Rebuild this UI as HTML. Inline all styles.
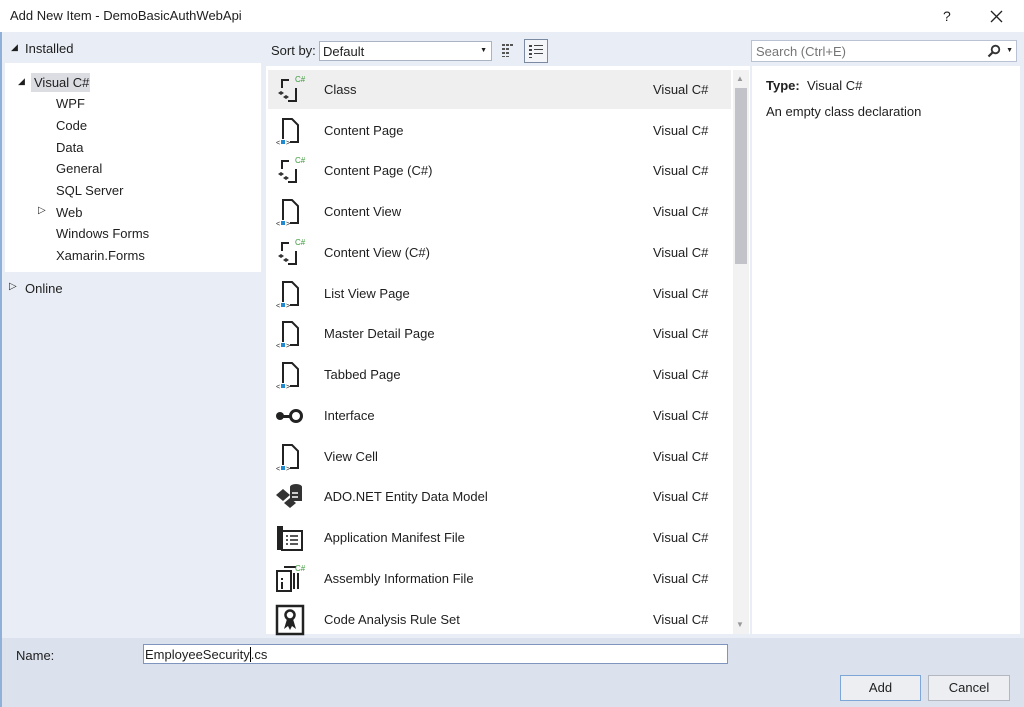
<!DOCTYPE html>
<html><head><meta charset="utf-8"><style>
*{box-sizing:border-box;margin:0;padding:0}
body{width:1024px;height:707px;overflow:hidden;background:#e9eef6;font-family:"Liberation Sans",sans-serif;font-size:13px;color:#1e1e1e;position:relative}
.a{position:absolute}
.title{left:0;top:0;width:1024px;height:32px;background:#fff}
.row{position:absolute;left:268px;width:463px;height:40px}
.row .n{position:absolute;left:56px;top:12px}
.row .t{position:absolute;left:385px;top:12px}
.row svg{position:absolute;left:6px;top:4px}
.tree div{position:absolute;font-size:13px}
</style></head><body>
<div class="a title"></div>
<div class="a" style="left:0;top:32px;width:2px;height:675px;background:#8fb0d8"></div>
<div class="a" style="left:10px;top:8px;font-size:13px">Add New Item - DemoBasicAuthWebApi</div>
<div class="a" style="left:943px;top:8px;font-size:14px">?</div>
<svg class="a" style="left:990px;top:10px" width="13" height="13"><path d="M1 1L12 12M12 1L1 12" stroke="#222" stroke-width="1.3"/></svg>

<div class="a" style="left:11px;top:42px;font-size:9px">◢</div>
<div class="a" style="left:25px;top:41px">Installed</div>
<div class="a" style="left:5px;top:63px;width:256px;height:209px;background:#fff"></div>
<div class="tree">
<div style="left:18px;top:76px;font-size:9px">◢</div>
<div style="left:31px;top:73px;width:59px;height:19px;background:#dcdde3"></div>
<div style="left:34px;top:75px">Visual C#</div>
<div style="left:56px;top:96px">WPF</div>
<div style="left:56px;top:118px">Code</div>
<div style="left:56px;top:140px">Data</div>
<div style="left:56px;top:161px">General</div>
<div style="left:56px;top:183px">SQL Server</div>
<div style="left:38px;top:205px;font-size:10px">▷</div>
<div style="left:56px;top:205px">Web</div>
<div style="left:56px;top:226px">Windows Forms</div>
<div style="left:56px;top:248px">Xamarin.Forms</div>
<div style="left:9px;top:281px;font-size:10px">▷</div>
<div style="left:25px;top:281px">Online</div>
</div>

<div class="a" style="left:271px;top:43px">Sort by:</div>
<div class="a" style="left:319px;top:41px;width:173px;height:20px;background:#fff;border:1px solid #a9b3c4"><span style="position:absolute;left:3px;top:2px">Default</span><span style="position:absolute;right:4px;top:5px;font-size:7px">▼</span></div>
<svg class="a" style="left:500px;top:42px" width="16" height="16"><g fill="#555"><rect x="2" y="2" width="3" height="2"/><rect x="6" y="2" width="3" height="2"/><rect x="10" y="2" width="3" height="2"/><rect x="2" y="6" width="3" height="2"/><rect x="6" y="6" width="3" height="2"/><rect x="2" y="10" width="3" height="2"/><rect x="6" y="10" width="3" height="2"/><rect x="2" y="14" width="3" height="1"/><rect x="6" y="14" width="3" height="1"/></g></svg>
<div class="a" style="left:524px;top:39px;width:24px;height:24px;border:1px solid #7a8aa0;background:#f3f5f9"></div>
<svg class="a" style="left:528px;top:43px" width="16" height="16"><g fill="#444"><rect x="1" y="2" width="3" height="2"/><rect x="6" y="2" width="9" height="1"/><rect x="1" y="6" width="3" height="2"/><rect x="6" y="6" width="9" height="1"/><rect x="1" y="10" width="3" height="2"/><rect x="6" y="10" width="9" height="1"/><rect x="1" y="14" width="3" height="1"/></g></svg>

<div class="a" style="left:751px;top:40px;width:266px;height:22px;background:#fff;border:1px solid #b8c2d2"><span style="position:absolute;left:4px;top:3px;color:#757575">Search (Ctrl+E)</span>
<svg style="position:absolute;right:15px;top:3px" width="14" height="14"><circle cx="8.5" cy="5.5" r="3.8" stroke="#333" stroke-width="1.8" fill="none"/><path d="M6 8L1.5 12.5" stroke="#333" stroke-width="2.2"/></svg>
<span style="position:absolute;right:3px;top:6px;font-size:7px">▼</span></div>

<div class="a" style="left:266px;top:66px;width:484px;height:568px;background:#fff"></div>
<div class="a" style="left:733px;top:70px;width:16px;height:564px;background:#f2f2f2"></div>
<div class="a" style="left:735px;top:88px;width:12px;height:176px;background:#c2c3c9"></div>
<div class="a" style="left:736px;top:74px;font-size:8px;color:#999">▲</div>
<div class="a" style="left:736px;top:620px;font-size:8px;color:#999">▼</div>
<div class="a" style="left:268px;top:70px;width:463px;height:39px;background:#efefef"></div>

<div class="a" style="left:752px;top:66px;width:268px;height:568px;background:#fff"></div>
<div class="a" style="left:766px;top:78px"><b>Type:</b>&nbsp; Visual C#</div>
<div class="a" style="left:766px;top:104px">An empty class declaration</div>

<!-- rows -->
<div class="row" style="top:70px"><svg width="32" height="32"><path d="M8 14V6h7M22 14v13h-8" stroke="#222" stroke-width="2" fill="none"/><text x="21" y="8" font-size="8" fill="#3a9a3a" font-family="Liberation Sans">C#</text><path d="M4 19l3-2 3 2-3 2zM9 23l3-2 3 2-3 2z" fill="#333"/></svg><span class="n">Class</span><span class="t">Visual C#</span></div>
<div class="row" style="top:111px"><svg width="32" height="32"><path d="M9 24V4h9l6 6v17h-8" stroke="#222" stroke-width="2" fill="none"/><text x="2" y="30" font-size="7" fill="#222">&lt;</text><rect x="7" y="25" width="4" height="4" fill="#1f8ad0"/><text x="12" y="30" font-size="7" fill="#222">&gt;</text></svg><span class="n">Content Page</span><span class="t">Visual C#</span></div>
<div class="row" style="top:151px"><svg width="32" height="32"><path d="M8 14V6h7M22 14v13h-8" stroke="#222" stroke-width="2" fill="none"/><text x="21" y="8" font-size="8" fill="#3a9a3a">C#</text><path d="M4 19l3-2 3 2-3 2zM9 23l3-2 3 2-3 2z" fill="#333"/></svg><span class="n">Content Page (C#)</span><span class="t">Visual C#</span></div>
<div class="row" style="top:192px"><svg width="32" height="32"><path d="M9 24V4h9l6 6v17h-8" stroke="#222" stroke-width="2" fill="none"/><text x="2" y="30" font-size="7" fill="#222">&lt;</text><rect x="7" y="25" width="4" height="4" fill="#1f8ad0"/><text x="12" y="30" font-size="7" fill="#222">&gt;</text></svg><span class="n">Content View</span><span class="t">Visual C#</span></div>
<div class="row" style="top:233px"><svg width="32" height="32"><path d="M8 14V6h7M22 14v13h-8" stroke="#222" stroke-width="2" fill="none"/><text x="21" y="8" font-size="8" fill="#3a9a3a">C#</text><path d="M4 19l3-2 3 2-3 2zM9 23l3-2 3 2-3 2z" fill="#333"/></svg><span class="n">Content View (C#)</span><span class="t">Visual C#</span></div>
<div class="row" style="top:274px"><svg width="32" height="32"><path d="M9 24V4h9l6 6v17h-8" stroke="#222" stroke-width="2" fill="none"/><text x="2" y="30" font-size="7" fill="#222">&lt;</text><rect x="7" y="25" width="4" height="4" fill="#1f8ad0"/><text x="12" y="30" font-size="7" fill="#222">&gt;</text></svg><span class="n">List View Page</span><span class="t">Visual C#</span></div>
<div class="row" style="top:314px"><svg width="32" height="32"><path d="M9 24V4h9l6 6v17h-8" stroke="#222" stroke-width="2" fill="none"/><text x="2" y="30" font-size="7" fill="#222">&lt;</text><rect x="7" y="25" width="4" height="4" fill="#1f8ad0"/><text x="12" y="30" font-size="7" fill="#222">&gt;</text></svg><span class="n">Master Detail Page</span><span class="t">Visual C#</span></div>
<div class="row" style="top:355px"><svg width="32" height="32"><path d="M9 24V4h9l6 6v17h-8" stroke="#222" stroke-width="2" fill="none"/><text x="2" y="30" font-size="7" fill="#222">&lt;</text><rect x="7" y="25" width="4" height="4" fill="#1f8ad0"/><text x="12" y="30" font-size="7" fill="#222">&gt;</text></svg><span class="n">Tabbed Page</span><span class="t">Visual C#</span></div>
<div class="row" style="top:396px"><svg width="32" height="32"><circle cx="6" cy="16" r="4" fill="#222"/><rect x="8" y="15" width="8" height="3" fill="#222"/><circle cx="22" cy="16" r="5.5" stroke="#222" stroke-width="3" fill="none"/></svg><span class="n">Interface</span><span class="t">Visual C#</span></div>
<div class="row" style="top:437px"><svg width="32" height="32"><path d="M9 24V4h9l6 6v17h-8" stroke="#222" stroke-width="2" fill="none"/><text x="2" y="30" font-size="7" fill="#222">&lt;</text><rect x="7" y="25" width="4" height="4" fill="#1f8ad0"/><text x="12" y="30" font-size="7" fill="#222">&gt;</text></svg><span class="n">View Cell</span><span class="t">Visual C#</span></div>
<div class="row" style="top:477px"><svg width="32" height="32"><ellipse cx="22" cy="6" rx="6" ry="3" fill="#333"/><rect x="16" y="6" width="12" height="14" fill="#333"/><path d="M2 14l7-6 7 6-7 6z" fill="#333"/><path d="M10 22l6-5 6 5-6 5z" fill="#333"/><path d="M18 12h6M18 16h6" stroke="#fff" stroke-width="1.5"/></svg><span class="n">ADO.NET Entity Data Model</span><span class="t">Visual C#</span></div>
<div class="row" style="top:518px"><svg width="32" height="32"><path d="M3 4h6v24H3z" fill="#222"/><rect x="8" y="9" width="20" height="19" stroke="#222" stroke-width="2" fill="none"/><path d="M12 14h2M16 14h8M12 18h2M16 18h8M12 22h2M16 22h8" stroke="#222" stroke-width="1.5"/></svg><span class="n">Application Manifest File</span><span class="t">Visual C#</span></div>
<div class="row" style="top:559px"><svg width="32" height="32"><path d="M3 28V8h14v20z" stroke="#222" stroke-width="2" fill="none"/><path d="M10 4h12M20 10v16M24 10v16" stroke="#222" stroke-width="2"/><rect x="7" y="19" width="2" height="7" fill="#222"/><rect x="7" y="15" width="2" height="2" fill="#222"/><text x="21" y="8" font-size="8" fill="#3a9a3a">C#</text></svg><span class="n">Assembly Information File</span><span class="t">Visual C#</span></div>
<div class="row" style="top:600px"><svg width="32" height="32"><rect x="3" y="2" width="26" height="28" stroke="#222" stroke-width="2.5" fill="none"/><circle cx="16" cy="11" r="4.5" stroke="#222" stroke-width="2.5" fill="none"/><path d="M13 15l-3 10 4-3 2 4 2-4 4 3-3-10" fill="#222"/></svg><span class="n">Code Analysis Rule Set</span><span class="t">Visual C#</span></div>

<div class="a" style="left:2px;top:638px;width:1022px;height:69px;background:#dbe1ed"></div>
<div class="a" style="left:16px;top:648px">Name:</div>
<div class="a" style="left:143px;top:644px;width:585px;height:20px;background:#fff;border:1px solid #7f95bd"><span style="position:absolute;left:1px;top:2px">EmployeeSecurity<span style="border-left:1px solid #000"></span>.cs</span></div>
<div class="a" style="left:840px;top:675px;width:81px;height:26px;background:#eceef2;border:1px solid #7ea7d8;text-align:center;line-height:24px">Add</div>
<div class="a" style="left:928px;top:675px;width:82px;height:26px;background:#eceef2;border:1px solid #b3b7bf;text-align:center;line-height:24px">Cancel</div>
</body></html>
